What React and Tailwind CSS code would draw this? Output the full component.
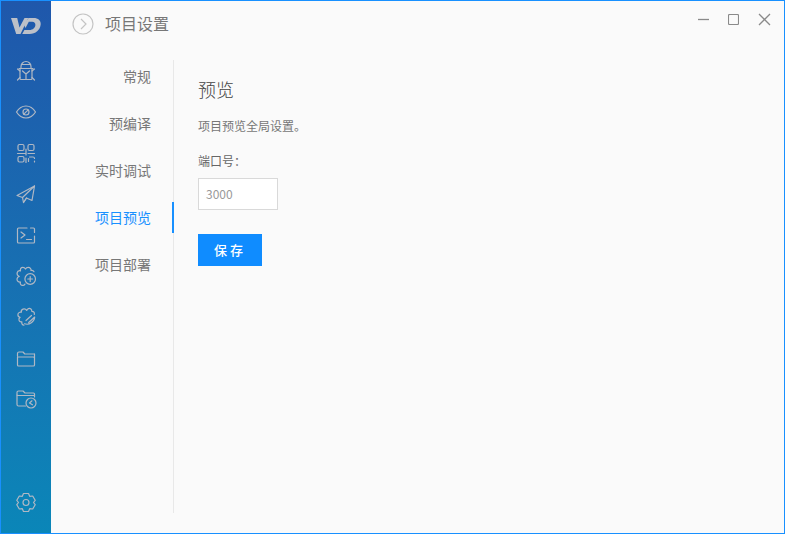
import React from "react";

const I = ({ children }) => (
  <svg width="24" height="24" viewBox="0 0 24 24" fill="none" stroke="#b0b8c4" strokeWidth="1.2" strokeLinecap="round" strokeLinejoin="round">
    {children}
  </svg>
);

const Logo = () => (
  <svg width="30" height="18" viewBox="0 0 30 18" fill="#bcc0c8">
    <path d="M0 1h6.200l2.300 9.500L13.500 1h3.800L9.500 17H5.200z" />
    <path d="M17.500 1h5c4.800 0 7.500 2.500 7.200 6.300C29.300 13 24.500 17 18.500 17h-7.300l2.200-4h5.100c3.300 0 5.700-2.300 5.900-5 .1-1.900-1-3.200-3.200-3.200h-3.400l-3.300 6.200-1.700-3.500z" />
  </svg>
);

const Bug = () => (
  <I>
    <path d="M7 9.500V7.500a5 5 0 0 1 10 0v2" />
    <path d="M5 9.500h14" />
    <path d="M7.500 5.500h9" />
    <path d="M6 9.500v10a1 1 0 0 0 1 1h10a1 1 0 0 0 1-1v-10" />
    <path d="M12 15v5.500M8.500 12l3.500 3 3.500-3" />
    <path d="M3.500 10l2.500 2M20.500 10L18 12M3.500 21L6 18.500M20.500 21L18 18.500" />
  </I>
);
const Eye = () => (
  <I>
    <path d="M2.500 12c2.500-4 5.700-6 9.500-6s7 2 9.500 6c-2.500 4-5.700 6-9.500 6s-7-2-9.500-6z" />
    <circle cx="12" cy="12" r="3" />
    <path d="M9.800 14.200l4.400-4.400" />
  </I>
);
const Qr = () => (
  <I>
    <rect x="4" y="3.500" width="6" height="6" rx="1.500" />
    <rect x="14" y="3.500" width="6" height="6" rx="1.500" />
    <rect x="4" y="15.500" width="6" height="5.500" rx="1.500" />
    <path d="M3.500 12.500h7.500M12 8v6M12 17v4.500M14 12.500h6.500M15.500 16h3.500a1.500 1.500 0 0 1 1.500 1.500M14.500 17.500v3M20.500 20v1" />
  </I>
);
const Send = () => (
  <I>
    <path d="M3 13.500L20.500 4 18 18.500l-5.500-2.500L9.500 20.500 8.500 15.500z" />
    <path d="M20.500 4L8.500 15.500M12.500 16L9.500 20.500" />
  </I>
);
const Term = () => (
  <I>
    <path d="M20.500 9.500V6a1 1 0 0 0-1-1h-3M13 5H4.500a1 1 0 0 0-1 1v13a1 1 0 0 0 1 1h15a1 1 0 0 0 1-1v-6" />
    <path d="M7 9l4 3-4 3M12.500 16.500h5" />
  </I>
);
const PuzzlePlus = () => (
  <I>
    <path d="M11 20c-.5 1.500-3 2-4.200.6-.7-.8-.7-1.800-.3-2.600-1.800.3-3.500-.8-3.500-2.700 0-1.500 1-2.500 2.300-2.800-1.500-.7-2.500-2-2.200-3.600.3-1.600 1.700-2.400 3.400-2.100C6 5 7 3.300 8.800 3.300c1.300 0 2.200.8 2.700 1.700.5-1 1.500-1.700 2.800-1.700 1.800 0 3 1.500 2.700 3.200 1.200-.3 2.500.2 3 1.200" />
    <circle cx="16.200" cy="15" r="5.300" />
    <path d="M13.800 15h4.800M16.200 12.600v4.800" />
  </I>
);
const PuzzleEdit = () => (
  <I>
    <path d="M20.300 9.500c.5-1.800-.7-3.300-2.500-3.200.2-1.900-1.500-3.300-3.300-2.700-.9.300-1.600 1-1.800 1.900-.8-1.300-2.200-2-3.700-1.400-1.500.6-2 1.900-1.600 3.100-1.700-.4-3.500.7-3.500 2.500 0 1.400 1 2.400 2.200 2.600-1.100.9-1.500 2.100-1 3.200.5 1.200 1.700 1.600 2.800 1.300-.5 1.900.5 3.300 2 3.400" />
    <path d="M10.500 18.800c5 1.700 9.800-2 10.200-6.800l-6 5.500M12 15.500l5.500-5" />
  </I>
);
const Folder = () => (
  <I>
    <path d="M3.500 10V7.500A1.500 1.500 0 0 1 5 6h4l1.800 2h9.700M3.500 11h16a1 1 0 0 1 1 1v7a1 1 0 0 1-1 1h-15a1 1 0 0 1-1-1z" />
    <path d="M20.500 8v4" />
  </I>
);
const FolderClock = () => (
  <I>
    <path d="M3 8V5.500A1.500 1.500 0 0 1 4.500 4H9l2 2h8.500a1 1 0 0 1 1 1v3" />
    <path d="M3 8v9.500A1.500 1.500 0 0 0 4.500 19H11.500M3 8.500h17.500" />
    <circle cx="17" cy="16" r="5" />
    <path d="M18 13.800L15.500 16l3 1.800" />
  </I>
);
const Gear = () => (
  <I>
    <path d="M9.500 3.500h5l1.200 2.800 3-.3 2.500 4.300L19.500 12.500l1.700 2.200-2.500 4.300-3-.3-1.200 2.800h-5l-1.200-2.800-3 .3-2.500-4.300 1.700-2.200-1.700-2.200L5.300 6l3 .3z" />
    <circle cx="12" cy="12.500" r="3" />
  </I>
);

const sideIcons = [Bug, Eye, Qr, Send, Term, PuzzlePlus, PuzzleEdit, Folder, FolderClock];

const navItems = ["常规", "预编译", "实时调试", "项目预览", "项目部署"];

export default function App() {
  return (
    <div className="w-[785px] h-[534px] border border-[#1890ff] bg-[#fafafa] flex overflow-hidden font-['Microsoft_YaHei','Noto_Sans_CJK_SC','Noto_Sans',sans-serif]">
      <aside className="w-[50px] h-full shrink-0 flex flex-col items-center bg-gradient-to-b from-[#1f57ab] to-[#0a86b8]">
        <div className="h-[49px] flex items-center justify-center">
          <Logo />
        </div>
        <div className="flex flex-col items-center">
          {sideIcons.map((Icon, i) => (
            <div key={i} className="h-[41px] w-[50px] flex items-center justify-center">
              <Icon />
            </div>
          ))}
        </div>
        <div className="mt-auto mb-[19px]">
          <Gear />
        </div>
      </aside>

      <main className="flex-1 flex flex-col min-w-0">
        <header className="h-[45px] flex items-center shrink-0 pl-[21px] pr-[13px]">
          <svg width="22" height="22" viewBox="0 0 22 22" fill="none" stroke="#c4c4c4" strokeWidth="1.2">
            <circle cx="11" cy="11" r="10" />
            <path d="M9 6l5 5-5 5" />
          </svg>
          <span className="ml-[11px] -mt-[2px] text-[16px] leading-[22px] text-[#777777]">项目设置</span>
          <div className="ml-auto flex items-center gap-[19px] -mt-[9px]">
            <svg width="11" height="11" viewBox="0 0 11 11" stroke="#8a8a8a" strokeWidth="1.3"><path d="M0 5.500h11" /></svg>
            <svg width="11" height="11" viewBox="0 0 11 11" fill="none" stroke="#8a8a8a" strokeWidth="1.1"><rect x="0.500" y="0.500" width="10" height="10" rx="1" /></svg>
            <svg width="13" height="13" viewBox="0 0 13 13" stroke="#8a8a8a" strokeWidth="1.3"><path d="M1 1l11 11M12 1L1 12" /></svg>
          </div>
        </header>

        <div className="flex mt-[14px] h-[453px]">
          <nav className="w-[123px] shrink-0 border-r border-[#e8e8e8]">
            <div className="-mt-[7px]">
              {navItems.map((t, i) => (
                <div
                  key={t}
                  className={`h-[47px] pr-[22px] flex items-center justify-end text-[14px] relative ${i === 3 ? "text-[#1890ff]" : "text-[#777777]"}`}
                >
                  {t}
                  {i === 3 && <span className="absolute right-[-1px] top-[8px] w-[2px] h-[31px] bg-[#1890ff]" />}
                </div>
              ))}
            </div>
          </nav>

          <section className="pl-[24px] pt-[15px]">
            <h2 className="text-[18px] leading-[28px] font-light text-[#444444]">预览</h2>
            <p className="mt-[14px] text-[12px] leading-[18px] text-[#777777]">项目预览全局设置。</p>
            <label className="block mt-[17px] text-[12px] leading-[18px] text-[#666666]">端口号：</label>
            <div className="mt-[8px] w-[80px] h-[32px] border border-[#d9d9d9] bg-white flex items-center pl-[7px] text-[12px] text-[#999999]">3000</div>
            <button className="mt-[24px] w-[64px] h-[32px] bg-[#0f8cff] text-white text-[13px] font-medium tracking-[3px] flex items-center justify-center">保存</button>
          </section>
        </div>
      </main>
    </div>
  );
}
